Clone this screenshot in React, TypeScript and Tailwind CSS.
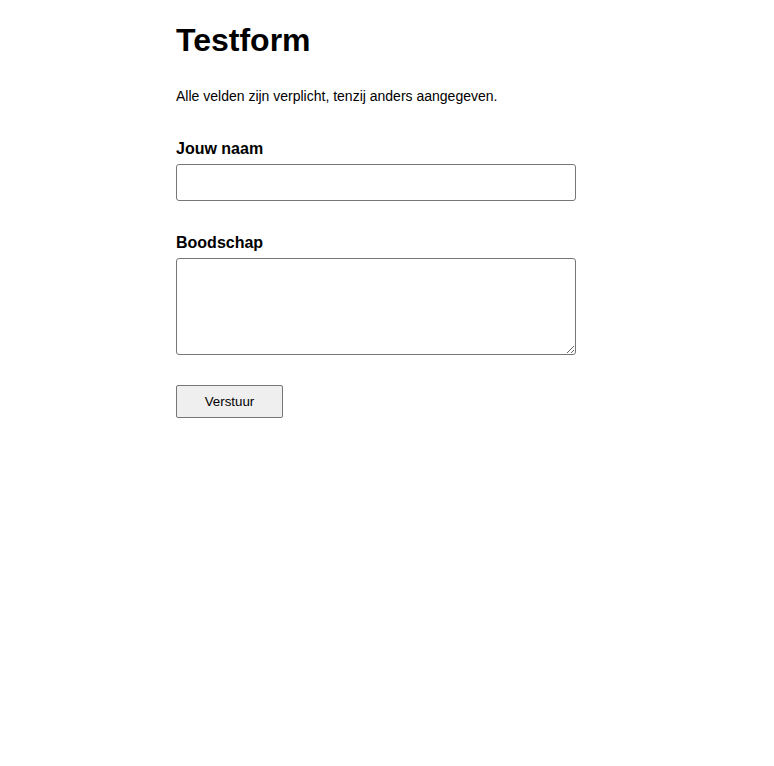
import { useState } from "react";

export default function App() {
  const [name, setName] = useState("");
  const [message, setMessage] = useState("");

  return (
    <div className="min-h-screen bg-white font-['Liberation_Sans',Arial,sans-serif] text-black">
      <main className="mx-auto w-[422px]">
        <h1 className="pt-[22px] text-[32px] font-bold leading-[37px]">Testform</h1>
        <p className="mt-[29px] text-[14px] leading-[16px]">
          Alle velden zijn verplicht, tenzij anders aangegeven.
        </p>

        <form
          className="mt-[36px] flex flex-col"
          onSubmit={(e) => e.preventDefault()}
        >
          <label htmlFor="name" className="text-[16px] font-bold leading-[18px]">
            Jouw naam
          </label>
          <input
            id="name"
            type="text"
            value={name}
            onChange={(e) => setName(e.target.value)}
            className="mt-[6px] h-[37px] w-[400px] rounded-[3px] border border-[#767676] bg-white px-2 text-[14px]"
          />

          <label htmlFor="message" className="mt-[33px] text-[16px] font-bold leading-[18px]">
            Boodschap
          </label>
          <textarea
            id="message"
            value={message}
            onChange={(e) => setMessage(e.target.value)}
            className="mt-[6px] h-[97px] w-[400px] resize-y rounded-[3px] border border-[#767676] bg-white px-2 py-1 text-[14px]"
          />

          <div className="mt-[30px]">
            <button
              type="submit"
              className="h-[33px] w-[107px] rounded-[2px] border border-[#767676] bg-[#efefef] text-[13.33px] text-black"
            >
              Verstuur
            </button>
          </div>
        </form>
      </main>
    </div>
  );
}
